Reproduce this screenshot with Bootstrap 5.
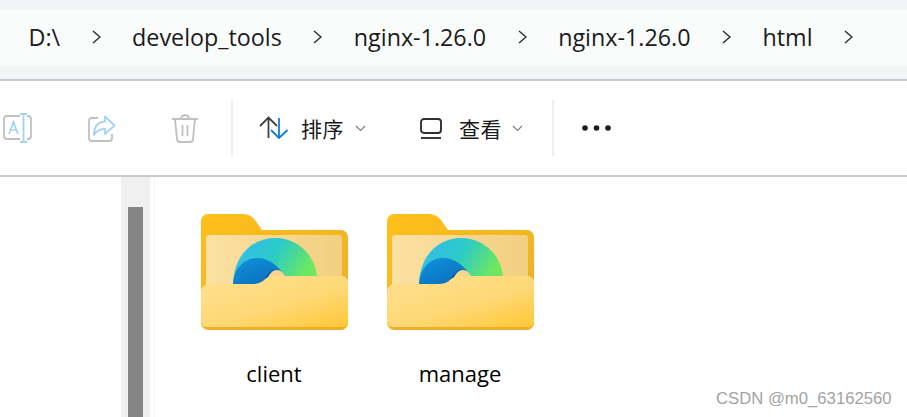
<!DOCTYPE html>
<html lang="zh"><head><meta charset="utf-8"><title>html</title>
<link href="https://cdn.jsdelivr.net/npm/bootstrap@5.3.0/dist/css/bootstrap.min.css" rel="stylesheet">
<style>
html,body{height:417px;overflow:hidden;background:#fff}
body{font-family:"Open Sans","Noto Sans CJK SC",sans-serif;color:#1b1b1b;position:relative}
.addr-band{height:81px;padding:10px 0 13px;background:#f3f4f6;border-bottom:2px solid #c8c8c8;box-sizing:border-box}
.addr-bar{height:56px;background:#fafcfc;padding-left:28.5px;gap:31.5px;font-size:23.3px;padding-bottom:2px}
.tool-bar{height:96px;border-bottom:2px solid #c8c8c8}
.tool-slot{display:flex;align-items:center}
.slot-a{width:88px;padding-left:3px}.slot-b{width:84px}.slot-c{width:59px}
.tool-sep{width:2px;height:56px;background:#eeeeee}
.slot-sort{width:186px;padding-left:26px}
.slot-view{width:133px;padding-left:1px}
.slot-more{padding-left:28px}
.tool-txt{font-size:21px;font-family:"Noto Sans CJK SC",sans-serif;line-height:1;letter-spacing:.4px}
.sort-ico{margin-right:12px}.view-ico{margin-right:17px}.drop-ico{margin-left:11px}.drop-view{margin-left:10px}
.pane-body{height:240px}
.left-gap{width:121px}
.scroll-track{width:29px;background:#f0f0f0;padding:30px 0 0 7px}
.scroll-thumb{width:15px;height:100%;background:#858585}
.pane-edge{width:5px;border-right:1px solid #f4f4f4}
.file-list{padding-left:26px;padding-top:37px}
.file-item{width:186px;text-align:center;color:#000;font-size:22px;line-height:28px;text-indent:3px}
.file-item svg{display:block;margin:0 auto 29px}
.wm{position:absolute;left:716px;top:389px;font-family:"Liberation Sans",sans-serif;font-size:16.7px;color:#a3a3a3;line-height:20px}
</style></head>
<body>
<svg width="0" height="0" class="position-absolute">
<defs>
<linearGradient id="gBack" x1="0" y1="0" x2="1" y2="1"><stop offset="0" stop-color="#ffc01a"/><stop offset="1" stop-color="#eaae2a"/></linearGradient>
<linearGradient id="gPaper" x1="0" y1="0" x2="1" y2="0"><stop offset="0" stop-color="#fbe1a3"/><stop offset="1" stop-color="#f2cf80"/></linearGradient>
<linearGradient id="gFront" x1="0.1" y1="0" x2="0.9" y2="1"><stop offset="0" stop-color="#fee08f"/><stop offset=".55" stop-color="#fed875"/><stop offset="1" stop-color="#fec838"/></linearGradient>
<linearGradient id="gDisc" x1="0" y1="0" x2="1" y2="0.35"><stop offset="0" stop-color="#35b9f5"/><stop offset=".55" stop-color="#2ccbc6"/><stop offset="1" stop-color="#6ce85f"/></linearGradient>
<linearGradient id="gDark" x1="0" y1="0" x2="0.8" y2="1"><stop offset="0" stop-color="#1192dc"/><stop offset="1" stop-color="#0a6dbb"/></linearGradient>
<symbol id="folderIco" viewBox="0 0 147 116">
<path d="M0 7a7 7 0 0 1 7-7H42c5 0 9 2 12 6l7 10H140a7 7 0 0 1 7 7V109a7 7 0 0 1-7 7H7a7 7 0 0 1-7-7z" fill="url(#gBack)"/>
<rect x="5" y="21" width="136" height="54" rx="3" fill="url(#gPaper)"/>
<path d="M32 72C32 42 51 24 74 24S116 42 116 66V72z" fill="url(#gDisc)"/>
<path d="M32 72C32 54 44 44 56 44C68 44 78 52 85 64V72z" fill="url(#gDark)"/>
<path d="M58 72C64 66 67 57 75 55C72 62 68 68 62 72z" fill="#0a4f8e"/>
<path d="M63 72C67 62 70 56 76 56C80 56 83 59 85 64V72z" fill="#f3d590"/>
<path d="M0 78a8 8 0 0 1 8-8H50c7 0 10-1 14-5 3-2 5-3 10-3H141a6 6 0 0 1 6 6V108a8 8 0 0 1-8 8H8a8 8 0 0 1-8-8z" fill="url(#gFront)"/>
<path d="M0 107a9 9 0 0 0 8 9H139a9 9 0 0 0 8-9 6 5 0 0 1-6 6H6a6 5 0 0 1-6-6z" fill="#eaae30"/>
</symbol>
<symbol id="chevR" viewBox="0 0 9 14"><path d="M1 1l7 6-7 6" fill="none" stroke="#2a2a2a" stroke-width="1.4"/></symbol>
<symbol id="chevD" viewBox="0 0 11 7"><path d="M1 1l4.500 4.500L10 1" fill="none" stroke="#7d7d7d" stroke-width="1.200"/></symbol>
</defs></svg>

<div class="addr-band">
<div class="addr-bar d-flex align-items-center">
<span>D:\</span><svg width="9" height="14"><use href="#chevR"/></svg>
<span>develop_tools</span><svg width="9" height="14"><use href="#chevR"/></svg>
<span>nginx-1.26.0</span><svg width="9" height="14"><use href="#chevR"/></svg>
<span>nginx-1.26.0</span><svg width="9" height="14"><use href="#chevR"/></svg>
<span>html</span><svg width="9" height="14"><use href="#chevR"/></svg>
</div></div>

<div class="tool-bar d-flex align-items-center">
<div class="tool-slot slot-a"><svg width="29" height="30" viewBox="0 0 29 30"><path d="M17 3h-13a3 3 0 0 0-3 3v17a3 3 0 0 0 3 3h13M24 3h1a3 3 0 0 1 3 3v17a3 3 0 0 1-3 3h-1" fill="none" stroke="#c0c0c0" stroke-width="1.800"/><path d="M17 1h7M20.500 1v28M17 29h7" fill="none" stroke="#a3d2f4" stroke-width="1.800"/><path d="M6 21l4.500-12 4.500 12M7.500 17h6" fill="none" stroke="#a3d2f4" stroke-width="1.700"/></svg></div>
<div class="tool-slot slot-b"><svg width="28" height="27" viewBox="0 0 28 27"><path d="M10 3H4a3 3 0 0 0-3 3v17a3 3 0 0 0 3 3h17a3 3 0 0 0 3-3v-4" fill="none" stroke="#c0c0c0" stroke-width="1.800"/><path d="M17 1.500l9.500 9-9.500 8.500v-5c-5 0-8 1-11 6 0-8 4-13 11-13.500z" fill="none" stroke="#a3d2f4" stroke-width="1.800" stroke-linejoin="round"/></svg></div>
<div class="tool-slot slot-c"><svg width="26" height="29" viewBox="0 0 26 29"><path d="M0 5h26M9 5c0-5 8-5 8 0M3 5l2 20a3 3 0 0 0 3 3h10a3 3 0 0 0 3-3l2-20M10.500 11v11M15.500 11v11" fill="none" stroke="#c0c0c0" stroke-width="1.800"/></svg></div>
<div class="tool-sep"></div>
<div class="tool-slot slot-sort"><svg width="30" height="24" viewBox="0 0 30 24" class="sort-ico flex-shrink-0"><path d="M9.500 22V2M1 10l8.500-8.500L18 10" fill="none" stroke="#404040" stroke-width="1.800"/><path d="M20 2v20M12 14l8 8 8.500-8" fill="none" stroke="#0f7fd6" stroke-width="1.800"/></svg><span class="tool-txt">排序</span><svg width="11" height="7" class="drop-ico"><use href="#chevD"/></svg></div>
<div class="tool-slot slot-view"><svg width="22" height="21" viewBox="0 0 22 21" class="view-ico"><rect x="1" y="1" width="20" height="14" rx="3" fill="none" stroke="#303030" stroke-width="1.900"/><path d="M1 20h20" stroke="#303030" stroke-width="1.900"/></svg><span class="tool-txt">查看</span><svg width="11" height="7" class="drop-view"><use href="#chevD"/></svg></div>
<div class="tool-sep"></div>
<div class="tool-slot slot-more"><svg width="29" height="6" viewBox="0 0 29 6"><circle cx="3" cy="3" r="2.800" fill="#1b1b1b"/><circle cx="14.500" cy="3" r="2.800" fill="#1b1b1b"/><circle cx="26" cy="3" r="2.800" fill="#1b1b1b"/></svg></div>
</div>

<div class="pane-body d-flex">
<div class="left-gap"></div>
<div class="scroll-track"><div class="scroll-thumb"></div></div>
<div class="pane-edge"></div>
<div class="file-list d-flex">
<div class="file-item"><svg width="147" height="116"><use href="#folderIco"/></svg>client</div>
<div class="file-item"><svg width="147" height="116"><use href="#folderIco"/></svg>manage</div>
</div></div>
<div class="wm">CSDN @m0_63162560</div>
</body></html>
